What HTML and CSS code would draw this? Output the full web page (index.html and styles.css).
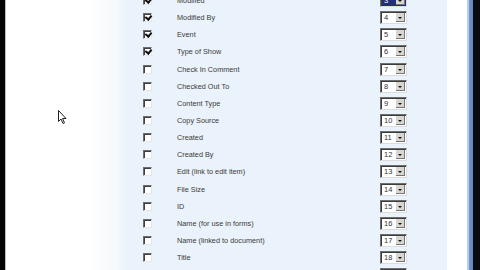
FILE: index.html
```html
<!DOCTYPE html>
<html>
<head>
<meta charset="utf-8">
<link rel="stylesheet" href="styles.css">
</head>
<body>
<div class="screen">
  <div class="edge-left"></div>
  <div class="edge-line"></div>
  <div class="blank"></div>
  <div class="panel">
    <div class="list">
      <div class="row"><span class="cb checked"></span><span class="label">Modified</span><span class="sel focus"><span class="num">3</span><span class="btn"></span></span></div>
      <div class="row"><span class="cb checked"></span><span class="label">Modified By</span><span class="sel"><span class="num">4</span><span class="btn"></span></span></div>
      <div class="row"><span class="cb checked"></span><span class="label">Event</span><span class="sel"><span class="num">5</span><span class="btn"></span></span></div>
      <div class="row"><span class="cb checked"></span><span class="label">Type of Show</span><span class="sel"><span class="num">6</span><span class="btn"></span></span></div>
      <div class="row"><span class="cb"></span><span class="label">Check In Comment</span><span class="sel"><span class="num">7</span><span class="btn"></span></span></div>
      <div class="row"><span class="cb"></span><span class="label">Checked Out To</span><span class="sel"><span class="num">8</span><span class="btn"></span></span></div>
      <div class="row"><span class="cb"></span><span class="label">Content Type</span><span class="sel"><span class="num">9</span><span class="btn"></span></span></div>
      <div class="row"><span class="cb"></span><span class="label">Copy Source</span><span class="sel"><span class="num">10</span><span class="btn"></span></span></div>
      <div class="row"><span class="cb"></span><span class="label">Created</span><span class="sel"><span class="num">11</span><span class="btn"></span></span></div>
      <div class="row"><span class="cb"></span><span class="label">Created By</span><span class="sel"><span class="num">12</span><span class="btn"></span></span></div>
      <div class="row"><span class="cb"></span><span class="label">Edit (link to edit item)</span><span class="sel"><span class="num">13</span><span class="btn"></span></span></div>
      <div class="row"><span class="cb"></span><span class="label">File Size</span><span class="sel"><span class="num">14</span><span class="btn"></span></span></div>
      <div class="row"><span class="cb"></span><span class="label">ID</span><span class="sel"><span class="num">15</span><span class="btn"></span></span></div>
      <div class="row"><span class="cb"></span><span class="label">Name (for use in forms)</span><span class="sel"><span class="num">16</span><span class="btn"></span></span></div>
      <div class="row"><span class="cb"></span><span class="label">Name (linked to document)</span><span class="sel"><span class="num">17</span><span class="btn"></span></span></div>
      <div class="row"><span class="cb"></span><span class="label">Title</span><span class="sel"><span class="num">18</span><span class="btn"></span></span></div>
      <div class="row"><span class="cb"></span><span class="label">Version</span><span class="sel"><span class="num">19</span><span class="btn"></span></span></div>
    </div>
  </div>
  <div class="gap"></div>
  <div class="frame-blue"></div>
  <div class="frame-dark"></div>
</div>
<svg class="cursor" width="9" height="15" viewBox="0 0 9 15"><path d="M0.5 0.5 L0.5 11.5 L3 9 L5 13.5 L6.5 12.8 L4.6 8.5 L8 8.5 Z" fill="#fff" stroke="#222" stroke-width="1" stroke-linejoin="round"/></svg>
</body>
</html>
```
FILE: styles.css
```css
html, body {
  margin: 0;
  padding: 0;
  width: 480px;
  height: 270px;
  overflow: hidden;
  background: #fff;
}
.screen {
  display: flex;
  width: 480px;
  height: 270px;
  overflow: hidden;
  font-family: "Liberation Sans", Arial, sans-serif;
  font-size: 7.3px;
  color: #3a3a3a;
}
.edge-left { width: 5px; background: #050505; }
.edge-line { width: 1px; background: #bdbdbd; }
.blank {
  width: 119px;
  background: linear-gradient(to right, #fff 0, #fff 80px, #f6f9fd 110px, #eef4fb 119px);
}
.panel {
  width: 322px;
  background: #eaf2fb;
  overflow: hidden;
}
.list {
  margin-top: -8px;
}
.row {
  display: flex;
  align-items: center;
  height: 17.15px;
  padding-left: 18px;
  padding-right: 40px;
}
.cb {
  width: 9px;
  height: 9px;
  box-sizing: border-box;
  background: #fff;
  border-top: 1px solid #6d6d6d;
  border-left: 1px solid #6d6d6d;
  border-right: 1px solid #e6e6e6;
  border-bottom: 1px solid #e6e6e6;
  box-shadow: inset 1px 1px 0 #404040;
  position: relative;
  margin-right: 25px;
}
.cb.checked::after {
  content: "";
  position: absolute;
  left: 2px;
  top: 0px;
  width: 3px;
  height: 4px;
  border-right: 2px solid #111;
  border-bottom: 2px solid #111;
  transform: rotate(40deg);
}
.label {
  flex: 1;
  white-space: nowrap;
}
.sel {
  display: flex;
  width: 27px;
  height: 13px;
  box-sizing: border-box;
  background: #fff;
  border-top: 1px solid #6f6f6f;
  border-left: 1px solid #6f6f6f;
  border-right: 1px solid #dcdcdc;
  border-bottom: 1px solid #dcdcdc;
  box-shadow: inset 1px 1px 0 #3c3c3c;
}
.num {
  flex: 1;
  padding-left: 3px;
  line-height: 11px;
  font-size: 7.5px;
  color: #333;
}
.sel.focus { background: #1f2f78; }
.sel.focus .num { color: #fff; }
.btn {
  width: 9px;
  margin: 1px 1px 1px 0;
  background: #d8d6d0;
  border-right: 1px solid #777;
  border-bottom: 1px solid #777;
  position: relative;
  box-sizing: border-box;
}
.btn::after {
  content: "";
  position: absolute;
  left: 2px;
  top: 4px;
  border-left: 2px solid transparent;
  border-right: 2px solid transparent;
  border-top: 2px solid #111;
}
.gap { width: 20px; background: #fff; }
.frame-blue {
  width: 6px;
  background: linear-gradient(to right, #b8cbea 0, #b8cbea 2px, #7494cb 2px, #6283c2 6px);
}
.frame-dark { width: 7px; background: #0a0a12; }
.cursor {
  position: absolute;
  left: 58px;
  top: 110px;
}
```
